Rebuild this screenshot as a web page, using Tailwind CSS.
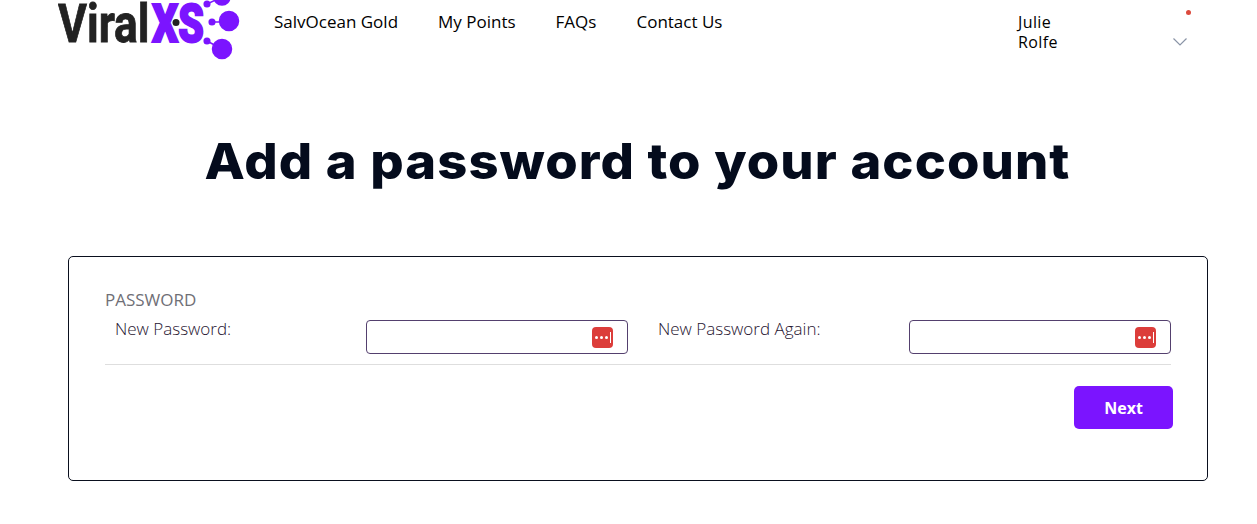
<!DOCTYPE html>
<html lang="en">
<head>
    <meta charset="UTF-8">
    <meta name="viewport" content="width=device-width, initial-scale=1.0">
    <title>Add a password</title>
    <script src="https://cdn.jsdelivr.net/npm/@tailwindcss/browser@4"></script>
</head>
<body class="bg-white text-black font-['Open_Sans',sans-serif] overflow-hidden">
    <div class="h-[524px] w-[1257px]">
        <!-- header -->
        <header class="flex items-start h-[60px] pl-[58px]">
            <svg class="w-[184px] h-[60px] shrink-0" viewBox="0 0 184 60">
                <text transform="translate(0 42) scale(0.82 1)" font-family="Roboto, sans-serif" font-weight="700" font-size="54" fill="#222222" stroke="#222222" stroke-width="0.8">Viral</text>
                <text transform="translate(94 42) scale(0.76 1)" font-family="Roboto, sans-serif" font-weight="900" font-size="54" fill="#7b14ff" stroke="#7b14ff" stroke-width="2">XS</text>
                <circle cx="118" cy="22.500" r="3.500" fill="#222222"/>
                <g fill="#7b14ff" stroke="#7b14ff" stroke-width="1.500">
                    <circle cx="171" cy="21" r="9.500"/>
                    <circle cx="154" cy="22" r="2.800"/>
                    <path d="M154 22H171" fill="none"/>
                    <circle cx="164" cy="49" r="9.500"/>
                    <circle cx="149" cy="41" r="2.800"/>
                    <path d="M149 41L164 49" fill="none"/>
                    <circle cx="149" cy="4" r="2.800"/>
                    <path d="M149 4L164 -3" fill="none"/>
                    <circle cx="164" cy="-3" r="8"/>
                </g>
            </svg>
            <nav class="flex gap-10 ml-[32px] mt-[11px] text-[17px] leading-[22px]">
                <a>SalvOcean Gold</a>
                <a>My Points</a>
                <a>FAQs</a>
                <a>Contact Us</a>
            </nav>
            <div class="ml-auto mr-[70px] flex w-[169px] justify-between pt-[12px]">
                <div class="text-base tracking-[0.4px] leading-5">Julie<br>Rolfe</div>
                <div class="flex flex-col items-center w-[14px]">
                    <span class="block size-[5px] rounded-full bg-[#dc4a3d] -mt-[2px] ml-[16px]"></span>
                    <svg class="w-[14px] h-[8px] mt-[23px]" viewBox="0 0 14 8" fill="none" stroke="#8a94a6" stroke-width="1.200"><path d="M.5.5 7 7l6.500-6.500"/></svg>
                </div>
            </div>
        </header>

        <h1 class="mt-[67px] pl-[17px] text-center text-[50px] leading-[68px] font-extrabold tracking-[1px] scale-x-[1.05] text-[#040b1c] font-['Inter',sans-serif]">Add a password to your account</h1>

        <!-- card -->
        <main class="mt-[61px] ml-[68px] w-[1140px] h-[225px] border border-[#0a0f1e] rounded-[5px] pt-[33px] px-[36px]">
            <h2 class="text-[17px] leading-5 text-[#6f6f76]">PASSWORD</h2>
            <div class="flex mt-[9px] h-[46px] border-b border-[#dedede] w-[1066px]">
                <label class="w-[261px] pl-[10px] text-[17px] leading-5 text-[#1f1430] font-light">New Password:</label>
                <div class="w-[262px] h-[34px] border border-[#54406e] rounded-[4px] flex items-center justify-end pr-[14px] mt-[1px]">
                    <span class="w-[21px] h-[21px] rounded-[4px] bg-[#dc3d3a] flex items-center justify-center gap-[2px]">
                        <i class="size-[3px] rounded-full bg-white"></i><i class="size-[3px] rounded-full bg-white"></i><i class="size-[3px] rounded-full bg-white"></i><i class="w-px h-[11px] bg-white"></i>
                    </span>
                </div>
                <label class="w-[251px] ml-[30px] text-[17px] leading-5 text-[#1f1430] font-light">New Password Again:</label>
                <div class="w-[262px] h-[34px] border border-[#54406e] rounded-[4px] flex items-center justify-end pr-[14px] mt-[1px]">
                    <span class="w-[21px] h-[21px] rounded-[4px] bg-[#dc3d3a] flex items-center justify-center gap-[2px]">
                        <i class="size-[3px] rounded-full bg-white"></i><i class="size-[3px] rounded-full bg-white"></i><i class="size-[3px] rounded-full bg-white"></i><i class="w-px h-[11px] bg-white"></i>
                    </span>
                </div>
            </div>
            <div class="flex justify-end mt-[21px] mr-[-2px]">
                <button class="w-[99px] h-[43px] rounded-[5px] bg-[#7b14ff] text-white font-bold text-base">Next</button>
            </div>
        </main>
    </div>
</body>
</html>
